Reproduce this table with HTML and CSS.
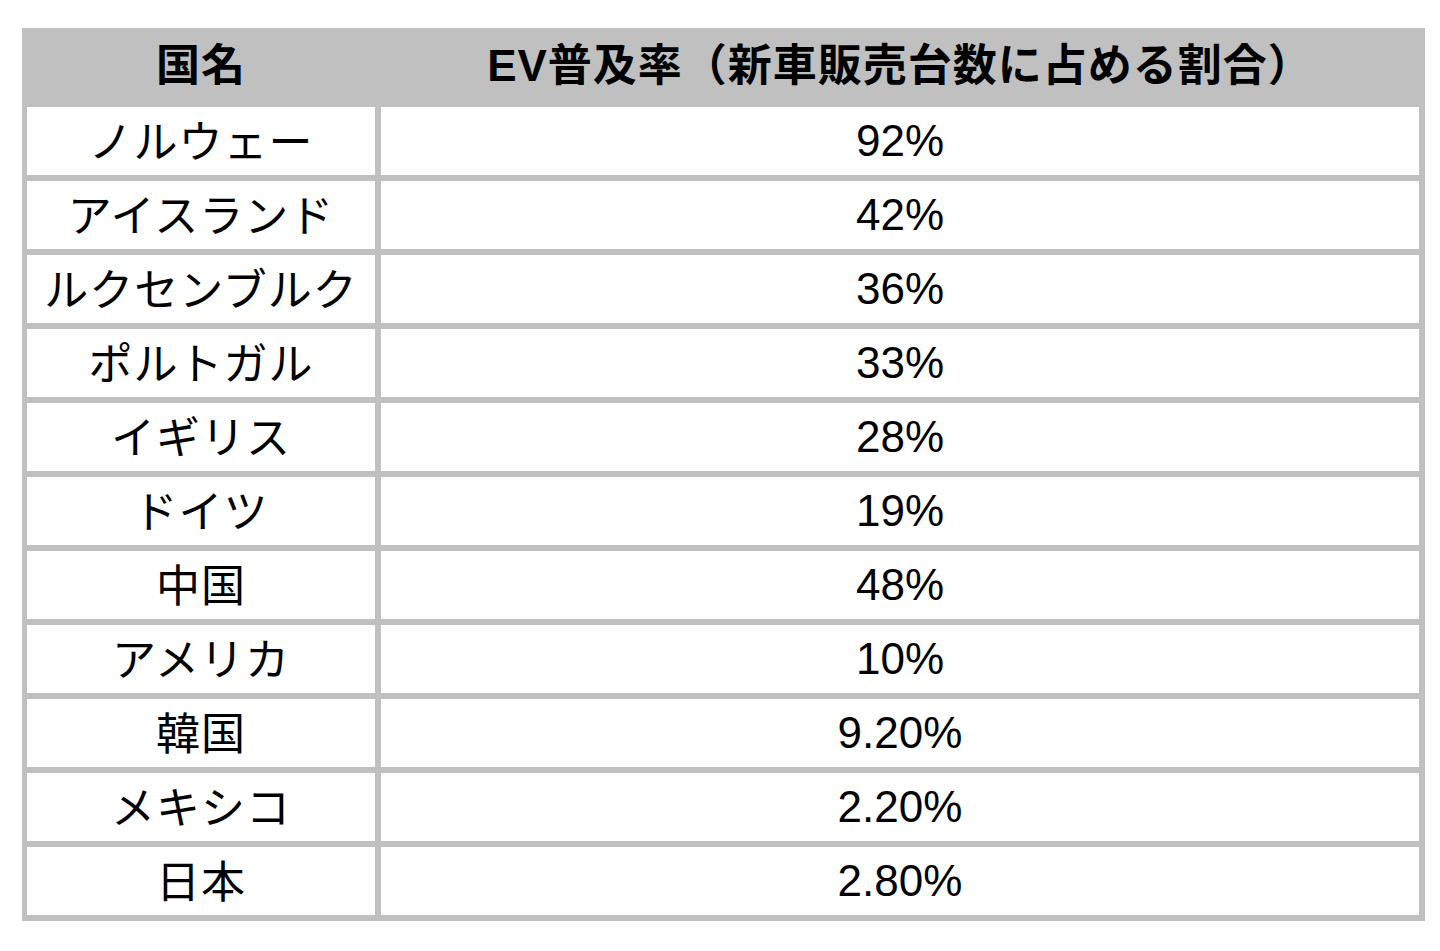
FILE: index.html
```html
<!DOCTYPE html>
<html lang="ja">
<head>
<meta charset="utf-8">
<title>EV普及率</title>
<link rel="stylesheet" href="styles.css">
</head>
<body>
<div class="page">
  <div class="table">
    <div class="head jp">国名</div>
    <div class="head jp">EV普及率（新車販売台数に占める割合）</div>
    <div class="cell jp">ノルウェー</div><div class="cell">92%</div>
    <div class="cell jp">アイスランド</div><div class="cell">42%</div>
    <div class="cell jp">ルクセンブルク</div><div class="cell">36%</div>
    <div class="cell jp">ポルトガル</div><div class="cell">33%</div>
    <div class="cell jp">イギリス</div><div class="cell">28%</div>
    <div class="cell jp">ドイツ</div><div class="cell">19%</div>
    <div class="cell jp">中国</div><div class="cell">48%</div>
    <div class="cell jp">アメリカ</div><div class="cell">10%</div>
    <div class="cell jp">韓国</div><div class="cell">9.20%</div>
    <div class="cell jp">メキシコ</div><div class="cell">2.20%</div>
    <div class="cell jp">日本</div><div class="cell">2.80%</div>
  </div>
</div>
</body>
</html>
```
FILE: styles.css
```css
html, body {
  margin: 0;
  padding: 0;
  background: #ffffff;
}
.page {
  padding: 28px 0 0 22px;
}
.table {
  width: 1403px;
  box-sizing: border-box;
  background: #c0c0c0;
  padding: 0 6px 6px 5px;
  display: grid;
  grid-template-columns: 348px 1038px;
  grid-template-rows: 73px repeat(11, 68px);
  column-gap: 6px;
  row-gap: 6px;
  font-family: "Liberation Sans", "Noto Sans CJK JP", sans-serif;
  font-size: 44px;
  color: #000;
}
.head {
  display: flex;
  align-items: center;
  justify-content: center;
  font-weight: bold;
  white-space: nowrap;
}
.cell {
  background: #ffffff;
  display: flex;
  align-items: center;
  justify-content: center;
  white-space: nowrap;
}
.jp {
  letter-spacing: 1px;
  padding-bottom: 5px;
  box-sizing: border-box;
}
```
